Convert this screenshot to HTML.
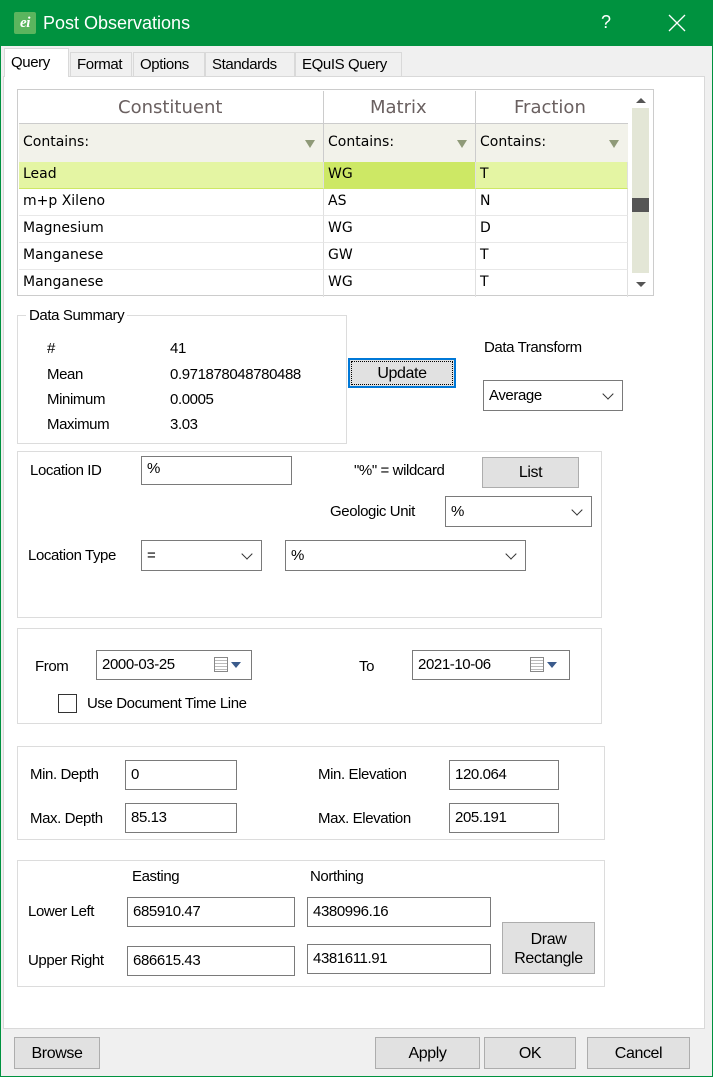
<!DOCTYPE html>
<html><head><style>
*{box-sizing:border-box;margin:0;padding:0}
body{width:713px;height:1077px;position:relative;background:#f0f0f0;font-family:"Liberation Sans",sans-serif;font-size:15px;color:#000;overflow:hidden;letter-spacing:-0.4px}
.a{position:absolute;white-space:nowrap}
.inp{position:absolute;background:#fff;border:1px solid #7a7a7a;padding:3px 0 0 5px;font-size:15px}
.btn{position:absolute;background:#e1e1e1;border:1px solid #adadad;text-align:center;font-size:16px}
.grp{position:absolute;border:1px solid #dcdcdc}
.cmb::after{content:"";position:absolute;right:10px;top:9px;width:7px;height:7px;border-right:1.3px solid #333;border-bottom:1.3px solid #333;transform:rotate(45deg)}
.tab{position:absolute;top:52px;height:24px;background:#f0f0f0;border:1px solid #d9d9d9;border-bottom:none;font-size:15px;padding:3px 0 0 6px}
.g{font-family:"DejaVu Sans","Liberation Sans",sans-serif;letter-spacing:0}
.cell{position:absolute;height:27px;border-bottom:1px solid #e8e8e8;border-right:1px solid #e0e0e0;padding:4px 0 0 4px;font-size:14px}
.cal{position:absolute;width:14px;height:15px;border:1px solid #888;background:repeating-linear-gradient(#fff 0 2px,#bbb 2px 3px);top:6px}
.tri{position:absolute;width:0;height:0;border-left:5px solid transparent;border-right:5px solid transparent;border-top:6px solid #3b5b8c;top:11px}
</style></head><body>
<div class="a" style="left:0;top:0;width:713px;height:46px;background:#00923f"></div>
<div class="a" style="left:0;top:0;width:1px;height:1077px;background:#00923f"></div>
<div class="a" style="right:0;top:0;width:1px;height:1077px;background:#00923f"></div>
<div class="a" style="left:0;bottom:0;width:713px;height:1px;background:#00923f"></div>
<div class="a" style="left:14px;top:12px;width:22px;height:22px;background:#5bb55e;border-radius:2px;color:#fff;font:italic bold 15px 'Liberation Serif',serif;text-align:center;line-height:22px">ei</div>
<div class="a" style="left:43px;top:13px;color:#fff;font-size:18px;letter-spacing:0">Post Observations</div>
<div class="a" style="left:601px;top:12px;color:#fff;font-size:18px">?</div>
<svg class="a" style="left:668px;top:14px" width="18" height="18"><path d="M1 1L17 17M17 1L1 17" stroke="#fff" stroke-width="1.3"/></svg>

<div class="a" style="left:3px;top:76px;width:702px;height:953px;background:#fff;border:1px solid #d9d9d9"></div>
<div class="tab" style="left:4px;top:48px;height:29px;background:#fff;width:65px;padding-top:5px">Query</div>
<div class="tab" style="left:70px;width:62px">Format</div>
<div class="tab" style="left:133px;width:72px">Options</div>
<div class="tab" style="left:205px;width:90px">Standards</div>
<div class="tab" style="left:295px;width:107px">EQuIS Query</div>

<!-- grid -->
<div class="a" style="left:17px;top:89px;width:637px;height:207px;border:1px solid #ccc;background:#fff"></div>
<div class="a" style="left:19px;top:124px;width:609px;height:38px;background:#f2f2ea"></div>
<div class="a" style="left:19px;top:123px;width:609px;height:1px;background:#ccc"></div>
<div class="a" style="left:323px;top:91px;width:1px;height:205px;background:#ccc"></div>
<div class="a" style="left:475px;top:91px;width:1px;height:205px;background:#ccc"></div>
<div class="a g" style="left:118px;top:97px;font-size:18px;color:#6a6060">Constituent</div>
<div class="a g" style="left:370px;top:97px;font-size:18px;color:#6a6060">Matrix</div>
<div class="a g" style="left:514px;top:97px;font-size:18px;color:#6a6060">Fraction</div>
<div class="a g" style="left:23px;top:134px;font-size:14px">Contains:</div>
<div class="a g" style="left:328px;top:134px;font-size:14px">Contains:</div>
<div class="a g" style="left:480px;top:134px;font-size:14px">Contains:</div>
<div class="a" style="left:305px;top:140px;border-left:5px solid transparent;border-right:5px solid transparent;border-top:8px solid #8f9a78"></div>
<div class="a" style="left:457px;top:140px;border-left:5px solid transparent;border-right:5px solid transparent;border-top:8px solid #8f9a78"></div>
<div class="a" style="left:609px;top:140px;border-left:5px solid transparent;border-right:5px solid transparent;border-top:8px solid #8f9a78"></div>
<div class="a" style="left:19px;top:162px;width:609px;height:27px;background:#e4f5a3;border-bottom:1px solid #cde865"></div>
<div class="a" style="left:324px;top:162px;width:151px;height:27px;background:#cde865"></div>
<div class="g">
<div class="cell" style="left:19px;top:162px;width:305px;border-bottom-color:#cde865">Lead</div><div class="cell" style="left:324px;top:162px;width:152px;border-bottom-color:#cde865">WG</div><div class="cell" style="left:476px;top:162px;width:152px;border-bottom-color:#cde865">T</div>
<div class="cell" style="left:19px;top:189px;width:305px">m+p Xileno</div><div class="cell" style="left:324px;top:189px;width:152px">AS</div><div class="cell" style="left:476px;top:189px;width:152px">N</div>
<div class="cell" style="left:19px;top:216px;width:305px">Magnesium</div><div class="cell" style="left:324px;top:216px;width:152px">WG</div><div class="cell" style="left:476px;top:216px;width:152px">D</div>
<div class="cell" style="left:19px;top:243px;width:305px">Manganese</div><div class="cell" style="left:324px;top:243px;width:152px">GW</div><div class="cell" style="left:476px;top:243px;width:152px">T</div>
<div class="cell" style="left:19px;top:270px;width:305px;border-bottom:none">Manganese</div><div class="cell" style="left:324px;top:270px;width:152px;border-bottom:none">WG</div><div class="cell" style="left:476px;top:270px;width:152px;border-bottom:none">T</div>
</div>
<div class="a" style="left:632px;top:108px;width:17px;height:165px;background:#e3e6d6"></div>
<div class="a" style="left:632px;top:198px;width:17px;height:14px;background:#555"></div>
<div class="a" style="left:636px;top:98px;border-left:5px solid transparent;border-right:5px solid transparent;border-bottom:5px solid #555"></div>
<div class="a" style="left:636px;top:282px;border-left:5px solid transparent;border-right:5px solid transparent;border-top:5px solid #555"></div>

<!-- data summary -->
<div class="grp" style="left:17px;top:315px;width:330px;height:129px"></div>
<div class="a" style="left:26px;top:307px;background:#fff;padding:0 3px">Data Summary</div>
<div class="a" style="left:47px;top:340px">#</div><div class="a" style="left:170px;top:340px">41</div>
<div class="a" style="left:47px;top:366px">Mean</div><div class="a" style="left:170px;top:366px">0.971878048780488</div>
<div class="a" style="left:47px;top:391px">Minimum</div><div class="a" style="left:170px;top:391px">0.0005</div>
<div class="a" style="left:47px;top:416px">Maximum</div><div class="a" style="left:170px;top:416px">3.03</div>
<div class="btn" style="left:348px;top:358px;width:108px;height:30px;border:2px solid #0078d7;padding-top:5px"><div style="position:absolute;inset:1px;border:1px dotted #000"></div>Update</div>
<div class="a" style="left:484px;top:339px">Data Transform</div>
<div class="inp cmb" style="left:483px;top:380px;width:140px;height:31px;padding-top:6px">Average</div>

<!-- location -->
<div class="grp" style="left:17px;top:451px;width:585px;height:167px"></div>
<div class="a" style="left:30px;top:462px">Location ID</div>
<div class="inp" style="left:141px;top:456px;width:151px;height:29px">%</div>
<div class="a" style="left:354px;top:462px">"%" = wildcard</div>
<div class="btn" style="left:482px;top:457px;width:97px;height:31px;padding-top:6px">List</div>
<div class="a" style="left:330px;top:503px">Geologic Unit</div>
<div class="inp cmb" style="left:445px;top:496px;width:147px;height:31px;padding-top:6px">%</div>
<div class="a" style="left:28px;top:547px">Location Type</div>
<div class="inp cmb" style="left:141px;top:540px;width:121px;height:31px;padding-top:6px">=</div>
<div class="inp cmb" style="left:285px;top:540px;width:241px;height:31px;padding-top:6px">%</div>

<!-- date -->
<div class="grp" style="left:17px;top:628px;width:585px;height:96px"></div>
<div class="a" style="left:35px;top:658px">From</div>
<div class="inp" style="left:96px;top:650px;width:156px;height:30px;padding-top:5px">2000-03-25<div class="cal" style="left:117px"></div><div class="tri" style="left:134px"></div></div>
<div class="a" style="left:359px;top:658px">To</div>
<div class="inp" style="left:412px;top:650px;width:158px;height:30px;padding-top:5px">2021-10-06<div class="cal" style="left:117px"></div><div class="tri" style="left:134px"></div></div>
<div class="a" style="left:58px;top:694px;width:19px;height:19px;border:1px solid #333;background:#fff"></div>
<div class="a" style="left:87px;top:695px">Use Document Time Line</div>

<!-- depth -->
<div class="grp" style="left:17px;top:746px;width:588px;height:94px"></div>
<div class="a" style="left:30px;top:766px">Min. Depth</div>
<div class="inp" style="left:125px;top:760px;width:112px;height:30px;padding-top:5px">0</div>
<div class="a" style="left:30px;top:810px">Max. Depth</div>
<div class="inp" style="left:125px;top:803px;width:112px;height:30px;padding-top:5px">85.13</div>
<div class="a" style="left:318px;top:766px">Min. Elevation</div>
<div class="inp" style="left:449px;top:760px;width:110px;height:30px;padding-top:5px">120.064</div>
<div class="a" style="left:318px;top:810px">Max. Elevation</div>
<div class="inp" style="left:449px;top:803px;width:110px;height:30px;padding-top:5px">205.191</div>

<!-- coords -->
<div class="grp" style="left:17px;top:860px;width:588px;height:127px"></div>
<div class="a" style="left:132px;top:868px">Easting</div>
<div class="a" style="left:310px;top:868px">Northing</div>
<div class="a" style="left:28px;top:903px">Lower Left</div>
<div class="inp" style="left:127px;top:897px;width:168px;height:30px;padding-top:5px">685910.47</div>
<div class="inp" style="left:307px;top:897px;width:184px;height:30px;padding-top:5px">4380996.16</div>
<div class="a" style="left:28px;top:952px">Upper Right</div>
<div class="inp" style="left:127px;top:946px;width:168px;height:30px;padding-top:5px">686615.43</div>
<div class="inp" style="left:307px;top:944px;width:184px;height:30px;padding-top:5px">4381611.91</div>
<div class="btn" style="left:502px;top:922px;width:93px;height:52px;padding-top:7px;line-height:19px">Draw<br>Rectangle</div>

<!-- bottom -->
<div class="btn" style="left:14px;top:1037px;width:86px;height:32px;padding-top:7px">Browse</div>
<div class="btn" style="left:375px;top:1037px;width:105px;height:32px;padding-top:7px">Apply</div>
<div class="btn" style="left:484px;top:1037px;width:92px;height:32px;padding-top:7px">OK</div>
<div class="btn" style="left:587px;top:1037px;width:103px;height:32px;padding-top:7px">Cancel</div>
</body></html>
